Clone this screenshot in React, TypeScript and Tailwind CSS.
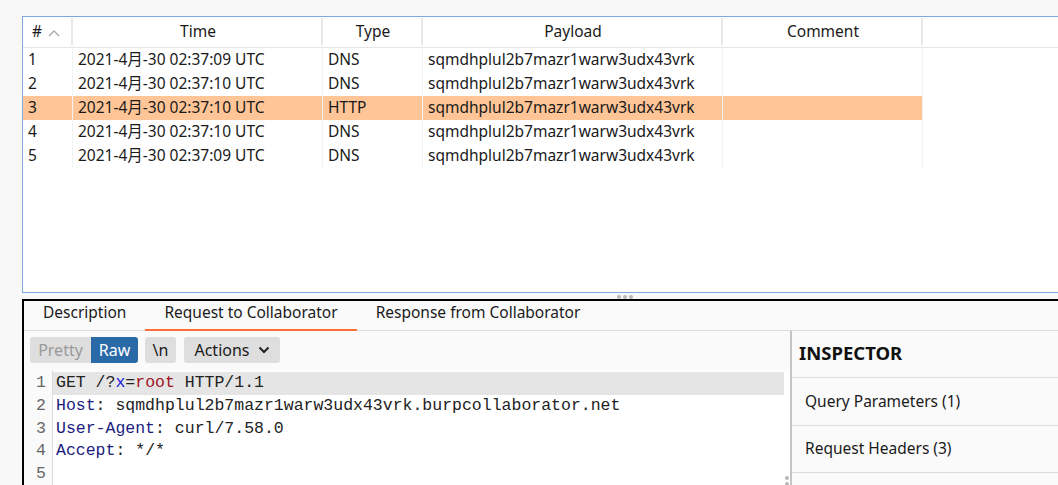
import React from "react";

const rows = [
  { n: "1", time: "2021-4月-30 02:37:09 UTC", type: "DNS" },
  { n: "2", time: "2021-4月-30 02:37:10 UTC", type: "DNS" },
  { n: "3", time: "2021-4月-30 02:37:10 UTC", type: "HTTP", sel: true },
  { n: "4", time: "2021-4月-30 02:37:10 UTC", type: "DNS" },
  { n: "5", time: "2021-4月-30 02:37:09 UTC", type: "DNS" },
];
const payload = "sqmdhplul2b7mazr1warw3udx43vrk";

const sans = { fontFamily: '"Noto Sans", "Noto Sans CJK SC", sans-serif' };
const mono = { fontFamily: '"Liberation Mono", "DejaVu Sans Mono", monospace' };

function HeaderCell({ w, children, last }: { w: string; children: React.ReactNode; last?: boolean }) {
  return (
    <div className={`${w} h-full flex items-center justify-center relative`}>
      {children}
      {!last && <div className="absolute right-0 top-[1px] bottom-[2px] w-[2px] bg-[#e8e8e8]" />}
    </div>
  );
}

export default function App() {
  return (
    <div className="w-[1058px] h-[485px] bg-[#f8f8f8] overflow-hidden text-[#1a1a1a] text-[15.5px]" style={sans}>
      <div className="h-[16px]" />
      {/* Table */}
      <div className="ml-[22px] h-[277px] border-t border-l border-b border-[#7fa9dc] bg-white flex flex-col">
        <div className="h-[31px] flex border-b border-[#e6e6e6] shrink-0">
          <HeaderCell w="w-[50px]">
            <span className="flex items-center gap-[6px] pr-[4px]">
              <span>#</span>
              <svg width="12" height="8" viewBox="0 0 12 8" className="mt-[1px]">
                <path d="M1 7 L6 2 L11 7" fill="none" stroke="#a8a8a8" strokeWidth="1.3" />
              </svg>
            </span>
          </HeaderCell>
          <HeaderCell w="w-[250px]">Time</HeaderCell>
          <HeaderCell w="w-[100px]">Type</HeaderCell>
          <HeaderCell w="w-[300px]">Payload</HeaderCell>
          <HeaderCell w="w-[200px]">Comment</HeaderCell>
          <div className="flex-1" />
        </div>
        <div className="flex flex-col">
          {rows.map((r) => (
            <div key={r.n} className={`h-[24px] flex items-center w-[900px] ${r.sel ? "bg-[#ffc597]" : ""}`}>
              <div className="w-[50px] h-full flex items-center pl-[5px] border-r border-[#f2f2f2]">{r.n}</div>
              <div className="w-[250px] h-full flex items-center pl-[5px] border-r border-[#f2f2f2]">{r.time}</div>
              <div className="w-[100px] h-full flex items-center pl-[5px] border-r border-[#f2f2f2]">{r.type}</div>
              <div className="w-[300px] h-full flex items-center pl-[5px] border-r border-[#f2f2f2]">{payload}</div>
              <div className="w-[200px] h-full border-r border-[#f2f2f2]" />
            </div>
          ))}
        </div>
      </div>
      {/* Splitter */}
      <div className="h-[6px] ml-[22px] flex justify-start items-start pt-[2px] pl-[595px]">
        <div className="flex gap-[2px]">
          <span className="w-[4px] h-[4px] rounded-full bg-[#b8b8b8]" />
          <span className="w-[4px] h-[4px] rounded-full bg-[#b8b8b8]" />
          <span className="w-[4px] h-[4px] rounded-full bg-[#b8b8b8]" />
        </div>
      </div>
      {/* Bottom panel */}
      <div className="ml-[22px] h-[187px] border-t-2 border-l-2 border-black bg-[#fafafa] flex flex-col">
        <div className="h-[30px] flex border-b border-[#dcdcdc] shrink-0">
          <div className="px-[19px] h-full flex items-center pb-[5px]">Description</div>
          <div className="px-[19px] h-full flex items-center pb-[5px] relative">
            Request to Collaborator
            <div className="absolute left-0 right-0 bottom-[-1px] h-[2px] bg-[#ff6c37]" />
          </div>
          <div className="px-[19px] h-full flex items-center pb-[5px]">Response from Collaborator</div>
        </div>
        <div className="flex flex-1 min-h-0">
          {/* Editor */}
          <div className="w-[766px] flex flex-col relative">
            <div className="h-[40px] flex items-start pt-[6px] pl-[6px] shrink-0 text-[16px]">
              <div className="flex h-[26px] rounded-[3px] overflow-hidden">
                <div className="w-[61px] flex items-center justify-center bg-[#dedede] text-[#9a9a9a]">Pretty</div>
                <div className="w-[47px] flex items-center justify-center bg-[#2a69a7] text-white">Raw</div>
              </div>
              <div className="ml-[7px] w-[31px] h-[26px] flex items-center justify-center bg-[#dedede] rounded-[3px]">\n</div>
              <div className="ml-[8px] w-[96px] h-[26px] flex items-center justify-center gap-[8px] bg-[#dedede] rounded-[3px]">
                Actions
                <svg width="12" height="8" viewBox="0 0 12 8">
                  <path d="M1.5 1.5 L6 6 L10.5 1.5" fill="none" stroke="#222" strokeWidth="2" />
                </svg>
              </div>
            </div>
            <div className="flex flex-1 bg-white" style={mono}>
              <div className="w-[29px] border-r border-[#dcdcdc] bg-[#fafafa] flex flex-col items-end pr-[6px] pt-[1px] text-[#666] text-[16.5px]">
                {[1, 2, 3, 4, 5].map((n) => (
                  <div key={n} className="h-[22.75px] leading-[22.75px]">{n}</div>
                ))}
              </div>
              <div className="flex-1 flex flex-col pt-[1px] text-[16.5px] pr-[6px]">
                <div className="h-[22.75px] leading-[22.75px] bg-[#e5e5e5] pl-[3px] text-[#222] whitespace-pre">
                  GET /?<span className="text-[#1a1adb]">x</span>=<span className="text-[#a0141e]">root</span> HTTP/1.1
                </div>
                <div className="h-[22.75px] leading-[22.75px] pl-[3px] text-[#222] whitespace-pre">
                  <span className="text-[#1b1b7e]">Host</span>: sqmdhplul2b7mazr1warw3udx43vrk.burpcollaborator.net
                </div>
                <div className="h-[22.75px] leading-[22.75px] pl-[3px] text-[#222] whitespace-pre">
                  <span className="text-[#1b1b7e]">User-Agent</span>: curl/7.58.0
                </div>
                <div className="h-[22.75px] leading-[22.75px] pl-[3px] text-[#222] whitespace-pre">
                  <span className="text-[#1b1b7e]">Accept</span>: */*
                </div>
                <div className="h-[22.75px]" />
              </div>
            </div>
            <div className="absolute right-[1px] bottom-[0px] flex flex-col gap-[2px]">
              <span className="w-[4px] h-[4px] rounded-full bg-[#b8b8b8]" />
              <span className="w-[4px] h-[4px] rounded-full bg-[#b8b8b8]" />
            </div>
          </div>
          <div className="w-[2px] bg-[#c4c4c4]" />
          {/* Inspector */}
          <div className="flex-1 flex flex-col bg-[#fafafa]">
            <div className="h-[47px] flex items-center pl-[7px] pb-[3px] font-bold text-[18.5px] text-[#111] border-b border-[#dcdcdc]">
              INSPECTOR
            </div>
            <div className="h-[48px] flex items-center pl-[13px] border-b border-[#dcdcdc]">Query Parameters (1)</div>
            <div className="h-[47px] flex items-center pl-[13px] border-b border-[#dcdcdc]">Request Headers (3)</div>
          </div>
        </div>
      </div>
    </div>
  );
}
